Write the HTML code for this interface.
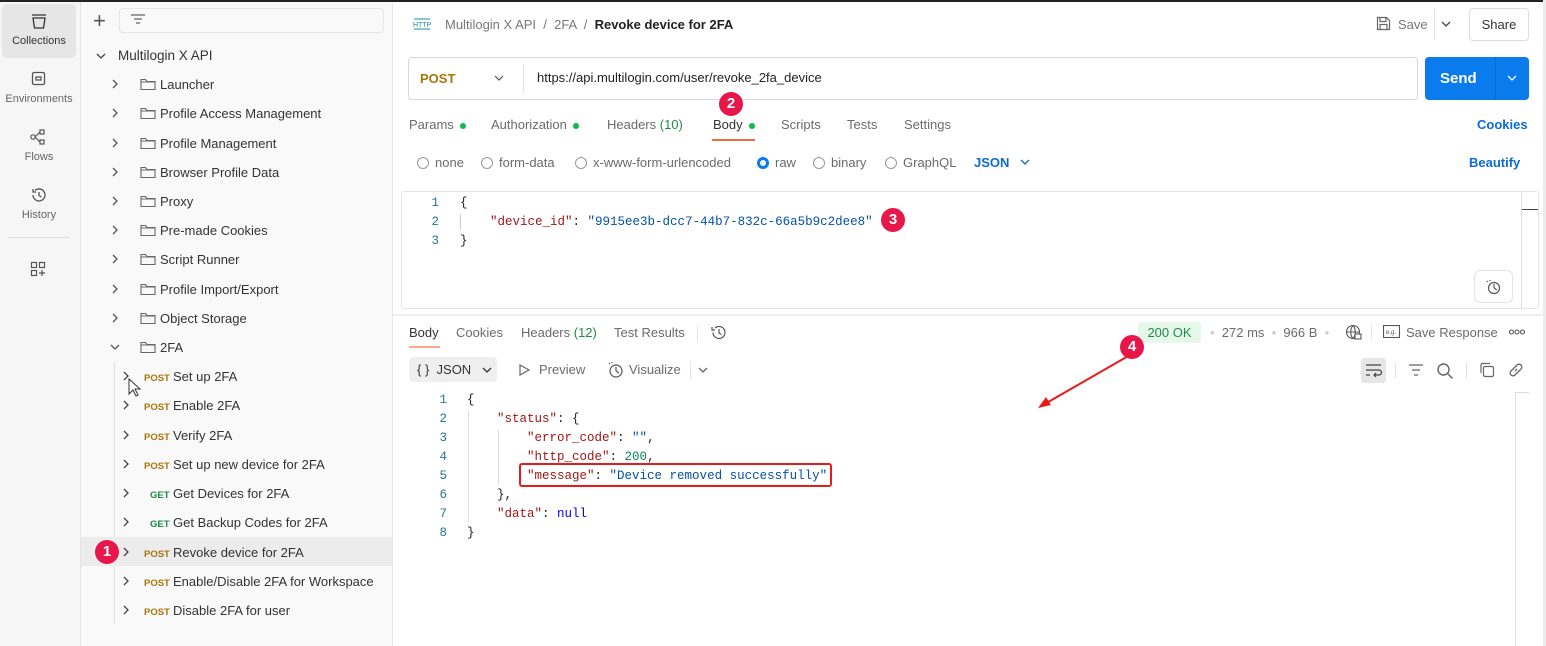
<!DOCTYPE html>
<html><head><meta charset="utf-8"><style>
*{box-sizing:border-box;margin:0;padding:0}
body{width:1546px;height:646px;overflow:hidden;font-family:"Liberation Sans",sans-serif;font-size:13px;color:#212121;background:#fff;position:relative}
.a{position:absolute;white-space:nowrap}
.mono{font-family:"Liberation Mono",monospace;font-size:12.5px}
.g{color:#6b6b6b}
.dot{display:inline-block;width:6px;height:6px;border-radius:50%;background:#0cbb52;margin-left:6px;vertical-align:middle}
.badge{position:absolute;width:24px;height:24px;border-radius:50%;background:#e8174a;color:#fff;font-weight:bold;font-size:15px;text-align:center;line-height:24px}
.row{position:absolute;left:81px;width:311px;height:29px}
.it{position:absolute;height:29px;line-height:29px;color:#333;font-size:13px;white-space:nowrap}
.post{color:#a6750b;font-size:9.5px;font-weight:bold;display:inline-block;width:29px}
.get{color:#1f8a4c;font-size:9.5px;font-weight:bold;display:inline-block;width:23px;margin-left:6px}
.radio{display:inline-block;width:12px;height:12px;border:1px solid #999;border-radius:50%;vertical-align:-2px;margin-right:6px}
.k{color:#a31515}.s{color:#0451a5}.n{color:#098658}
</style></head><body>
<div class="a" style="left:0;top:0;width:1546px;height:2px;background:#222"></div>
<!-- rail -->
<div class="a" style="left:0;top:2px;width:81px;height:644px;background:#f6f6f6;border-right:1px solid #e4e4e4"></div>
<div class="a" style="left:2px;top:4px;width:74px;height:54px;background:#e6e6e6;border-radius:5px"></div>
<svg class="a" style="left:30px;top:13px" width="18" height="18" viewBox="0 0 18 18" fill="none" stroke="#333" stroke-width="1.3"><path d="M2 2h14M3 5h12l-1.5 10h-9z"/></svg>
<div class="a" style="left:0;top:35px;width:78px;text-align:center;font-size:11px;color:#333">Collections</div>
<svg class="a" style="left:31px;top:71px" width="16" height="16" fill="none" stroke="#555" stroke-width="1.3"><rect x="1.5" y="1.5" width="12" height="12" rx="1.5"/><rect x="5" y="6" width="5" height="3"/></svg>
<div class="a" style="left:0;top:93px;width:78px;text-align:center;font-size:11px;color:#666">Environments</div>
<svg class="a" style="left:29px;top:128px" width="18" height="18" fill="none" stroke="#555" stroke-width="1.2"><circle cx="4" cy="9" r="2.2"/><rect x="11" y="2" width="4" height="4"/><rect x="11" y="12" width="4" height="4"/><path d="M6 9l5-5M6 9l5 5"/></svg>
<div class="a" style="left:0;top:151px;width:78px;text-align:center;font-size:11px;color:#666">Flows</div>
<svg class="a" style="left:30px;top:186px" width="18" height="18" fill="none" stroke="#555" stroke-width="1.3"><path d="M3 9a6 6 0 1 0 2-4.5M3 3v3h3M9 6v3.5l2.5 1.5"/></svg>
<div class="a" style="left:0;top:209px;width:78px;text-align:center;font-size:11px;color:#666">History</div>
<div class="a" style="left:9px;top:237px;width:60px;height:1px;background:#ddd"></div>
<svg class="a" style="left:30px;top:261px" width="16" height="16" fill="none" stroke="#555" stroke-width="1.2"><rect x="1.5" y="1.5" width="5" height="5"/><rect x="9.5" y="1.5" width="5" height="5"/><rect x="1.5" y="9.5" width="5" height="5"/><path d="M12 9v6M9 12h6"/></svg>
<!-- sidebar -->
<div class="a" style="left:81px;top:2px;width:312px;height:644px;background:#f9f9f9;border-right:1px solid #e8e8e8"></div>
<div class="a" style="left:93px;top:8px;font-size:22px;color:#555;font-weight:300">+</div>
<div class="a" style="left:119px;top:8px;width:265px;height:25px;border:1px solid #e6e6e6;border-radius:4px;background:#f9f9f9"></div>
<svg class="a" style="left:130px;top:13px" width="16" height="14" stroke="#666" stroke-width="1.2"><path d="M1 2h14M4 6h8M6 10h4"/></svg>
<svg class="a" style="left:95px;top:51px" width="12" height="10" fill="none" stroke="#444" stroke-width="1.3"><path d="M2 3l4 4 4-4"/></svg>
<div class="a" style="left:118px;top:48px;font-size:13.5px;color:#333">Multilogin X API</div>
<div class="a" style="left:114px;top:362px;width:1px;height:262px;background:#e0e0e0"></div>
<div class="row" style="top:537px;background:#ececec"></div>
<!-- folders -->
<svg class="a" style="left:105px;top:60px" width="60" height="300" fill="none" stroke="#555" stroke-width="1.3">
<defs><g id="c"><path d="M8 -4l4 4-4 4"/></g><g id="f"><path d="M36 -4.5v10h14v-8h-8l-1.5-2z M36 -2h14" stroke="#666" stroke-width="1.1"/></g></defs>
<g transform="translate(0,24)"><use href="#c"/><use href="#f"/></g>
<g transform="translate(0,53)"><use href="#c"/><use href="#f"/></g>
<g transform="translate(0,83)"><use href="#c"/><use href="#f"/></g>
<g transform="translate(0,112)"><use href="#c"/><use href="#f"/></g>
<g transform="translate(0,141)"><use href="#c"/><use href="#f"/></g>
<g transform="translate(0,170)"><use href="#c"/><use href="#f"/></g>
<g transform="translate(0,199)"><use href="#c"/><use href="#f"/></g>
<g transform="translate(0,229)"><use href="#c"/><use href="#f"/></g>
<g transform="translate(0,258)"><use href="#c"/><use href="#f"/></g>
<g transform="translate(0,287)"><path d="M6 -2l4 4 4-4"/><use href="#f"/></g>
</svg>
<div class="it" style="left:160px;top:70px">Launcher</div>
<div class="it" style="left:160px;top:99px">Profile Access Management</div>
<div class="it" style="left:160px;top:129px">Profile Management</div>
<div class="it" style="left:160px;top:158px">Browser Profile Data</div>
<div class="it" style="left:160px;top:187px">Proxy</div>
<div class="it" style="left:160px;top:216px">Pre-made Cookies</div>
<div class="it" style="left:160px;top:245px">Script Runner</div>
<div class="it" style="left:160px;top:275px">Profile Import/Export</div>
<div class="it" style="left:160px;top:304px">Object Storage</div>
<div class="it" style="left:160px;top:333px">2FA</div>
<!-- requests -->
<svg class="a" style="left:118px;top:360px" width="20" height="260" fill="none" stroke="#444" stroke-width="1.3">
<defs><g id="c2"><path d="M6 -4l4 4-4 4"/></g></defs>
<use href="#c2" y="16"/><use href="#c2" y="45"/><use href="#c2" y="75"/><use href="#c2" y="104"/><use href="#c2" y="133"/><use href="#c2" y="162"/><use href="#c2" y="192"/><use href="#c2" y="221"/><use href="#c2" y="250"/>
</svg>
<div class="it" style="left:144px;top:362px"><span class="post">POST</span>Set up 2FA</div>
<div class="it" style="left:144px;top:391px"><span class="post">POST</span>Enable 2FA</div>
<div class="it" style="left:144px;top:421px"><span class="post">POST</span>Verify 2FA</div>
<div class="it" style="left:144px;top:450px"><span class="post">POST</span>Set up new device for 2FA</div>
<div class="it" style="left:144px;top:479px"><span class="get">GET</span>Get Devices for 2FA</div>
<div class="it" style="left:144px;top:508px"><span class="get">GET</span>Get Backup Codes for 2FA</div>
<div class="it" style="left:144px;top:538px"><span class="post">POST</span>Revoke device for 2FA</div>
<div class="it" style="left:144px;top:567px"><span class="post">POST</span>Enable/Disable 2FA for Workspace</div>
<div class="it" style="left:144px;top:596px"><span class="post">POST</span>Disable 2FA for user</div>
<svg class="a" style="left:128px;top:378px" width="14" height="20"><path d="M1 1v15l4-4 3 6 2-1-3-6h5z" fill="#fff" stroke="#333" stroke-width="1"/></svg>
<div class="badge" style="left:95px;top:540px">1</div>
<!-- main header -->
<svg class="a" style="left:412px;top:16px" width="20" height="16" fill="none" stroke="#1a8f9e" stroke-width="1.1"><path d="M2 3h16M2 13h16"/><text x="1" y="11" font-size="7" fill="#1a8f9e" stroke="none" font-family="Liberation Sans">HTTP</text></svg>
<div class="a" style="left:445px;top:17px;color:#777">Multilogin X API &nbsp;/&nbsp; 2FA &nbsp;/&nbsp; <span style="color:#222;font-weight:bold">Revoke device for 2FA</span></div>
<svg class="a" style="left:1376px;top:16px" width="15" height="15" fill="none" stroke="#666" stroke-width="1.2"><path d="M1.5 1.5h9l3 3v9h-12z M4 1.5v4h6v-4 M4 13.5v-5h7v5"/></svg>
<div class="a" style="left:1398px;top:17px;color:#777">Save</div>
<div class="a" style="left:1434px;top:8px;width:1px;height:32px;background:#e6e6e6"></div>
<svg class="a" style="left:1441px;top:20px" width="10" height="8" fill="none" stroke="#444" stroke-width="1.3"><path d="M1 2l4 4 4-4"/></svg>
<div class="a" style="left:1469px;top:8px;width:60px;height:33px;border:1px solid #ddd;border-radius:4px;text-align:center;line-height:31px;color:#333">Share</div>
<!-- url bar -->
<div class="a" style="left:408px;top:57px;width:1010px;height:43px;border:1px solid #d6d6d6;border-radius:4px"></div>
<div class="a" style="left:420px;top:71px;color:#a6750b;font-weight:bold">POST</div>
<svg class="a" style="left:494px;top:74px" width="10" height="8" fill="none" stroke="#555" stroke-width="1.2"><path d="M1 2l4 4 4-4"/></svg>
<div class="a" style="left:523px;top:64px;width:1px;height:29px;background:#e3e3e3"></div>
<div class="a" style="left:537px;top:70px;color:#222">https://api.multilogin.com/user/revoke_2fa_device</div>
<div class="a" style="left:1425px;top:57px;width:104px;height:43px;background:#097bed;border-radius:4px"></div>
<div class="a" style="left:1495px;top:57px;width:1px;height:43px;background:#0868cc"></div>
<div class="a" style="left:1440px;top:70px;color:#fff;font-weight:bold;font-size:15px">Send</div>
<svg class="a" style="left:1507px;top:74px" width="10" height="8" fill="none" stroke="#fff" stroke-width="1.3"><path d="M1 2l4 4 4-4"/></svg>
<!-- tabs -->
<div class="a g" style="left:409px;top:117px">Params<span class="dot"></span></div>
<div class="a g" style="left:491px;top:117px">Authorization<span class="dot"></span></div>
<div class="a g" style="left:607px;top:117px">Headers <span style="color:#1f8a4c">(10)</span></div>
<div class="a" style="left:713px;top:117px;color:#333">Body<span class="dot"></span></div>
<div class="a" style="left:712px;top:139px;width:43px;height:2px;background:#f26b3a"></div>
<div class="a g" style="left:781px;top:117px">Scripts</div>
<div class="a g" style="left:847px;top:117px">Tests</div>
<div class="a g" style="left:904px;top:117px">Settings</div>
<div class="a" style="left:1477px;top:117px;color:#0b6bd3;font-weight:bold">Cookies</div>
<div class="badge" style="left:719px;top:92px">2</div>
<!-- body radios -->
<div class="a g" style="left:417px;top:155px"><span class="radio"></span>none</div>
<div class="a g" style="left:481px;top:155px"><span class="radio"></span>form-data</div>
<div class="a g" style="left:575px;top:155px"><span class="radio"></span>x-www-form-urlencoded</div>
<div class="a g" style="left:757px;top:155px"><span class="radio" style="border:3px solid #097bed"></span>raw</div>
<div class="a g" style="left:813px;top:155px"><span class="radio"></span>binary</div>
<div class="a g" style="left:885px;top:155px"><span class="radio"></span>GraphQL</div>
<div class="a" style="left:974px;top:155px;color:#0b6bd3;font-weight:bold">JSON</div>
<svg class="a" style="left:1020px;top:158px" width="10" height="8" fill="none" stroke="#0b6bd3" stroke-width="1.3"><path d="M1 2l4 4 4-4"/></svg>
<div class="a" style="left:1469px;top:155px;color:#0b6bd3;font-weight:bold">Beautify</div>
<!-- request editor -->
<div class="a" style="left:401px;top:191px;width:1138px;height:118px;border:1px solid #e4e4e4;border-radius:3px"></div>
<div class="a" style="left:1521px;top:192px;width:1px;height:116px;background:#ddd"></div>
<div class="a" style="left:1522px;top:209px;width:16px;height:1px;background:#444"></div>
<div class="a mono" style="left:431px;top:194px;line-height:19px;color:#237893;text-align:right;width:8px">1<br>2<br>3</div>
<div class="a mono" style="left:460px;top:194px;line-height:19px">{<br>&nbsp;&nbsp;&nbsp;&nbsp;<span class="k">"device_id"</span>: <span class="s">"9915ee3b-dcc7-44b7-832c-66a5b9c2dee8"</span><br>}</div>
<div class="a" style="left:460px;top:214px;width:1px;height:16px;background:#ccc"></div>
<div class="badge" style="left:881px;top:208px">3</div>
<div class="a" style="left:1474px;top:270px;width:39px;height:33px;border:1px solid #e4e4e4;border-radius:6px"></div>
<svg class="a" style="left:1485px;top:279px" width="16" height="16" fill="none" stroke="#555" stroke-width="1.2"><circle cx="9" cy="9" r="5.5"/><path d="M9 9V5M9 9l3 2M2 2l1 1M5 1v1"/></svg>
<div class="a" style="left:393px;top:314px;width:1153px;height:2px;background:#eee"></div>
<!-- response tabs -->
<div class="a" style="left:409px;top:325px;color:#333">Body</div>
<div class="a" style="left:409px;top:346px;width:31px;height:2px;background:#f9a98a"></div>
<div class="a g" style="left:456px;top:325px">Cookies</div>
<div class="a g" style="left:521px;top:325px">Headers <span style="color:#1f8a4c">(12)</span></div>
<div class="a g" style="left:614px;top:325px">Test Results</div>
<div class="a" style="left:697px;top:325px;width:1px;height:16px;background:#e3e3e3"></div>
<svg class="a" style="left:710px;top:324px" width="17" height="17" fill="none" stroke="#555" stroke-width="1.2"><path d="M3 8.5a6 6 0 1 0 2-4.5M2 3v3h3M9 5v4l2.5 1.5"/></svg>
<div class="a" style="left:1138px;top:322px;width:63px;height:21px;background:#e5f8ea;border-radius:3px;color:#1f8a4c;text-align:center;line-height:21px">200 OK</div>
<div class="a g" style="left:1210px;top:325px"><span style="color:#ccc">•</span>&nbsp; 272 ms &nbsp;<span style="color:#ccc">•</span>&nbsp; 966 B &nbsp;<span style="color:#ccc">•</span></div>
<svg class="a" style="left:1345px;top:324px" width="18" height="17" fill="none" stroke="#555" stroke-width="1.1"><circle cx="8" cy="8" r="6.5"/><path d="M1.5 8h13M8 1.5c-3 3-3 10 0 13M8 1.5c3 3 3 10 0 13"/><rect x="10" y="10" width="6" height="5" fill="#fff"/></svg>
<div class="a" style="left:1371px;top:324px;width:1px;height:16px;background:#e3e3e3"></div>
<svg class="a" style="left:1383px;top:325px" width="17" height="13" fill="none" stroke="#555" stroke-width="1.1"><rect x="0.5" y="0.5" width="16" height="12"/><text x="3" y="9" font-size="6" fill="#555" stroke="none">e.g.</text></svg>
<div class="a g" style="left:1406px;top:325px">Save Response</div>
<svg class="a" style="left:1509px;top:329px" width="16" height="6" fill="none" stroke="#555" stroke-width="1.1"><circle cx="2.5" cy="3" r="2"/><circle cx="8" cy="3" r="2"/><circle cx="13.5" cy="3" r="2"/></svg>
<div class="badge" style="left:1120px;top:335px">4</div>
<svg class="a" style="left:1030px;top:350px" width="110" height="60"><path d="M100 5L13 55" stroke="#e81b1b" stroke-width="2"/><path d="M8 58l13-3-5-8z" fill="#e81b1b"/></svg>
<!-- format bar -->
<div class="a" style="left:409px;top:357px;width:88px;height:25px;background:#efefef;border-radius:4px"></div>
<div class="a" style="left:417px;top:362px;color:#333">{ } &nbsp;JSON</div>
<svg class="a" style="left:482px;top:366px" width="10" height="8" fill="none" stroke="#333" stroke-width="1.3"><path d="M1 2l4 4 4-4"/></svg>
<svg class="a" style="left:518px;top:364px" width="12" height="12" fill="none" stroke="#666" stroke-width="1.2"><path d="M2 1l9 5-9 5z"/></svg>
<div class="a g" style="left:539px;top:362px">Preview</div>
<svg class="a" style="left:606px;top:361px" width="18" height="18" fill="none" stroke="#555" stroke-width="1.2"><circle cx="10" cy="10" r="6"/><path d="M10 10V6M10 10l3 2M3 2l1 1M6 1v1"/></svg>
<div class="a g" style="left:629px;top:362px">Visualize</div>
<div class="a" style="left:690px;top:361px;width:1px;height:18px;background:#e3e3e3"></div>
<svg class="a" style="left:698px;top:366px" width="10" height="8" fill="none" stroke="#666" stroke-width="1.3"><path d="M1 2l4 4 4-4"/></svg>
<div class="a" style="left:1361px;top:358px;width:25px;height:25px;background:#e6e6e6;border-radius:3px"></div>
<svg class="a" style="left:1365px;top:362px" width="17" height="17" fill="none" stroke="#444" stroke-width="1.2"><path d="M1 3h15M1 8h13a2.5 2.5 0 0 1 0 5h-5M1 13h4M11 11l-2 2 2 2"/></svg>
<div class="a" style="left:1395px;top:362px;width:1px;height:16px;background:#e3e3e3"></div>
<svg class="a" style="left:1408px;top:363px" width="16" height="14" stroke="#666" stroke-width="1.2"><path d="M1 2h14M4 7h8M6 12h4"/></svg>
<svg class="a" style="left:1436px;top:362px" width="18" height="18" fill="none" stroke="#666" stroke-width="1.4"><circle cx="7.5" cy="7.5" r="5.5"/><path d="M11.5 11.5l5 5"/></svg>
<div class="a" style="left:1466px;top:362px;width:1px;height:16px;background:#e3e3e3"></div>
<svg class="a" style="left:1479px;top:362px" width="16" height="16" fill="none" stroke="#666" stroke-width="1.2"><rect x="4.5" y="4.5" width="10" height="10" rx="1.5"/><path d="M2 11V3a1.5 1.5 0 0 1 1.5-1.5H11"/></svg>
<svg class="a" style="left:1508px;top:362px" width="16" height="16" fill="none" stroke="#666" stroke-width="1.3"><path d="M7 9l2-2M6 6l3-3a2.5 2.5 0 0 1 4 4l-3 3M10 10l-3 3a2.5 2.5 0 0 1-4-4l3-3"/></svg>
<div class="a" style="left:1515px;top:392px;width:1px;height:254px;background:#ddd"></div>
<div class="a" style="left:1515px;top:392px;width:14px;height:1px;background:#ddd"></div>
<!-- response code -->
<div class="a mono" style="left:437px;top:391px;line-height:19px;color:#237893;text-align:right;width:10px">1<br>2<br>3<br>4<br>5<br>6<br>7<br>8</div>
<div class="a mono" style="left:467px;top:391px;line-height:19px">{<br>&nbsp;&nbsp;&nbsp;&nbsp;<span class="k">"status"</span>: {<br>&nbsp;&nbsp;&nbsp;&nbsp;&nbsp;&nbsp;&nbsp;&nbsp;<span class="k">"error_code"</span>: <span class="s">""</span>,<br>&nbsp;&nbsp;&nbsp;&nbsp;&nbsp;&nbsp;&nbsp;&nbsp;<span class="k">"http_code"</span>: <span class="n">200</span>,<br>&nbsp;&nbsp;&nbsp;&nbsp;&nbsp;&nbsp;&nbsp;&nbsp;<span class="k">"message"</span>: <span class="s">"Device removed successfully"</span><br>&nbsp;&nbsp;&nbsp;&nbsp;},<br>&nbsp;&nbsp;&nbsp;&nbsp;<span class="k">"data"</span>: <span style="color:#0000ff">null</span><br>}</div>
<div class="a" style="left:468px;top:411px;width:1px;height:111px;background:#ddd"></div>
<div class="a" style="left:498px;top:430px;width:1px;height:55px;background:#ddd"></div>
<div class="a" style="left:519px;top:463px;width:313px;height:24px;border:2px solid #e81b1b;border-radius:3px"></div>
<div class="a" style="left:1543px;top:0;width:3px;height:646px;background:#ececec"></div>
</body></html>
